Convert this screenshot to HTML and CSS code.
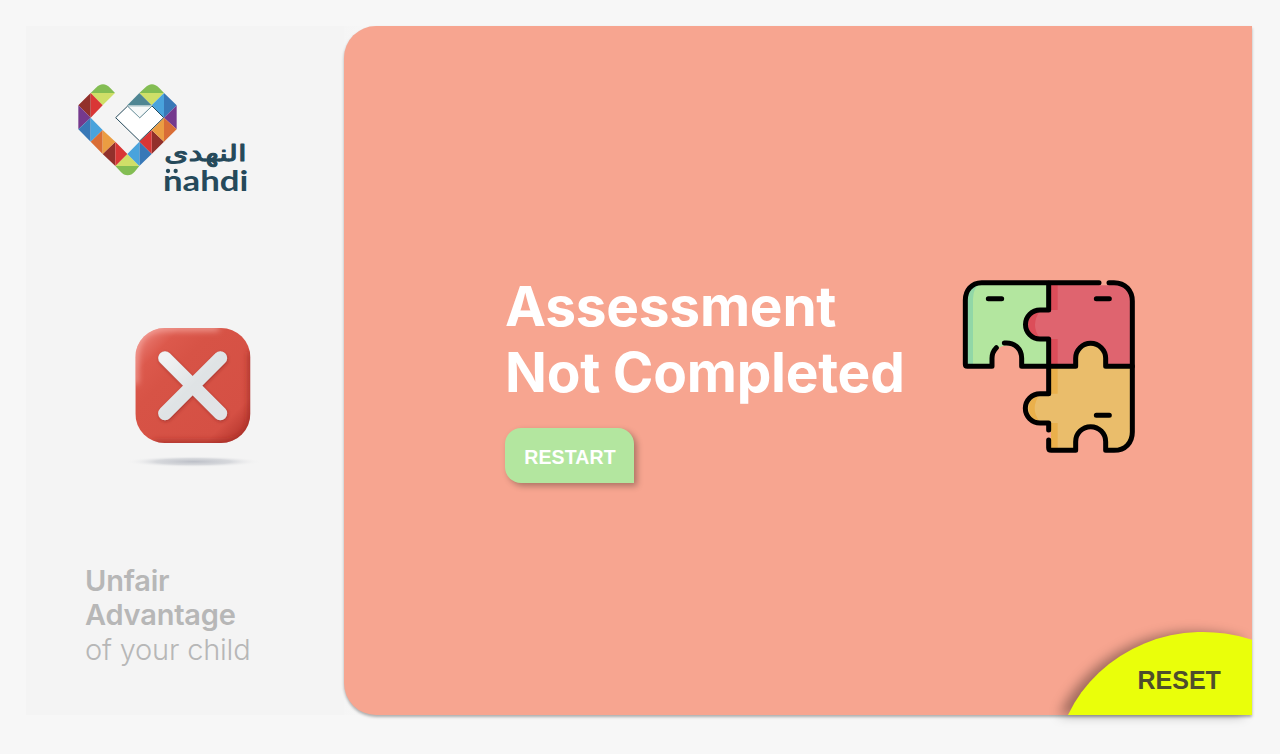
FILE: index.html
```html
<!DOCTYPE html>
<html lang="en">
<head>
<meta charset="utf-8">
<title>Assessment Not Completed</title>
<link rel="stylesheet" href="styles.css">
</head>
<body>
<div class="shell">
  <aside class="side">
    <svg class="logo" viewBox="0 0 570 375" role="img" aria-label="Nahdi">
      <g fill="#83bd53"><path d="M62 54L78 38C90 24 108 24 120 38L135 54ZM208 54L225 38C238 24 254 24 267 38L282 54ZM136 273L152 290C164 304 182 304 194 290L208 273Z"/></g>
      <g fill="#cfdf68"><path d="M62 54H135L98 91ZM208 54H282L245 91ZM172 237L208 273H136Z"/></g>
      <path fill="#92302b" d="M62 54V128L25 91ZM136 200V273L98 237ZM245 165L282 200L245 237Z"/>
      <path fill="#d93635" d="M62 54L98 91L62 128ZM136 200L172 237L136 273ZM245 165V237L208 200Z"/>
      <path fill="#75398d" d="M25 91L62 128L25 163ZM320 91V163L282 128Z"/>
      <path fill="#3878b7" d="M62 128V200L25 163ZM208 200L245 237L208 273ZM282 54L320 91L282 128Z"/>
      <path fill="#49a3dc" d="M62 128L98 165L62 200ZM208 200V273L172 237ZM282 54V128L245 91Z"/>
      <path fill="#d96d36" d="M98 165V237L62 200ZM282 128L320 163L282 200Z"/>
      <path fill="#eb9d42" d="M98 165L136 200L98 237ZM282 128V200L245 165Z"/>
      <path fill="#4f8693" d="M208 54L245 91H172Z"/>
      <path fill="#fff" stroke="#25495a" stroke-width="3" d="M173 93L137 128L209 198L281 128L246 93L209 128Z"/>
      <path fill="#f7f9f9" stroke="#4f8693" stroke-width="1.5" d="M173 93H246L209 128Z"/>
      <text class="logo-ar" x="530" y="259" text-anchor="start" textLength="247" lengthAdjust="spacingAndGlyphs" direction="rtl">النهدى</text>
      <text class="logo-en" x="279" y="347" textLength="256" lengthAdjust="spacingAndGlyphs">nahdi</text>
      <g fill="#25495a"><circle cx="294" cy="288" r="6.5"/><circle cx="317" cy="288" r="6.5"/></g>
    </svg>

    <svg class="cross" viewBox="0 0 450 480" aria-hidden="true">
      <defs>
        <linearGradient id="face" x1="0" y1="0" x2="1" y2="1">
          <stop offset="0" stop-color="#f08c84"/><stop offset=".2" stop-color="#dc594c"/>
          <stop offset=".35" stop-color="#d75346"/><stop offset=".8" stop-color="#d55044"/><stop offset="1" stop-color="#a92b24"/>
        </linearGradient>
        <linearGradient id="bar" x1="0" y1="0" x2="1" y2="1">
          <stop offset="0" stop-color="#f1f2f3"/><stop offset=".5" stop-color="#dfe3e5"/><stop offset="1" stop-color="#e2e3e6"/>
        </linearGradient>
        <radialGradient id="ground"><stop offset="0" stop-color="#bcbfc7"/><stop offset=".55" stop-color="#cfd1d6" stop-opacity=".8"/><stop offset="1" stop-color="#f4f4f4" stop-opacity="0"/></radialGradient>
        <clipPath id="tile"><rect x="46" y="39" width="345" height="345" rx="88"/></clipPath>
        <filter id="soft" filterUnits="userSpaceOnUse" x="-20" y="-20" width="490" height="490"><feGaussianBlur stdDeviation="10"/></filter>
        <filter id="lift" x="-20%" y="-20%" width="140%" height="140%"><feDropShadow dx="2" dy="4" stdDeviation="4" flood-color="#80201a" flood-opacity=".5"/></filter>
      </defs>
      <ellipse cx="220" cy="440" rx="205" ry="17" fill="url(#ground)"/>
      <g clip-path="url(#tile)">
        <rect x="46" y="39" width="345" height="345" fill="url(#face)"/>
        <path d="M395 110V300Q395 388 307 388H100" fill="none" stroke="#98251f" stroke-opacity=".8" stroke-width="18" filter="url(#soft)"/>
        <path d="M46 200V130Q46 39 134 39H290" fill="none" stroke="#f8b4ac" stroke-opacity=".8" stroke-width="16" stroke-linecap="round" filter="url(#soft)"/>
      </g>
      <g filter="url(#lift)"><path d="M135 129L301 295M301 129L135 295" fill="none" stroke="#dfe3e5" stroke-width="41" stroke-linecap="round"/>
      <path d="M135 129L301 295M301 129L135 295" fill="none" stroke="url(#bar)" stroke-width="38" stroke-linecap="round"/></g>
    </svg>

    <p class="tagline"><strong>Unfair<br>Advantage</strong><br>of your child</p>
  </aside>

  <main class="panel">
    <section class="message">
      <h1>Assessment<br>Not Completed</h1>
      <button class="restart">RESTART</button>
    </section>
    <svg class="puzzle" viewBox="0 0 600 585" aria-hidden="true">
      <path fill="#b3e69f" d="M95 38H296V120H270A42 42 0 0 0 270 207H296V289H215V265A45 45 0 0 0 126 265V289H46V87Q46 38 95 38Z"/>
      <path fill="#91d7a7" d="M95 38Q46 38 46 87V289H69V87Q69 50 95 38Z"/>
      <path fill="#df646f" d="M296 38H495Q547 38 547 90V289H467V265A45 45 0 0 0 377 265V289H296V207H270A42 42 0 0 1 270 120H296Z"/>
      <path fill="#dc4d59" d="M296 42H323V120H296ZM296 207H323V289H296ZM270 122A42 42 0 0 0 270 205Q240 165 270 122Z"/>
      <path fill="#eabd6b" d="M296 289H377V265A45 45 0 0 1 467 265V289H547V485Q547 540 495 540H467V515A45 45 0 0 0 377 515V540H296V459H270A44 44 0 0 1 270 371H296Z"/>
      <path fill="#eab04b" d="M296 294H323V371H296ZM296 459H323V536H296ZM270 373A43 43 0 0 0 270 457Q238 415 270 373Z"/>
      <path fill="#f7a590" d="M452 30H472V46H452ZM288 486H303V504H288Z"/>
      <g class="outline">
        <path d="M447 38H95C64 38 46 62 46 90V283Q46 289 52 289H126V265Q126 246 139 233"/>
        <path d="M163 219C195 216 215 238 215 265V289H377V265A45 45 0 0 1 467 265V289H547"/>
        <path d="M477 38H492C526 38 547 62 547 93V486C547 518 526 541 492 541H467V515A45 45 0 0 0 377 515V541H304Q296 541 296 533V510"/>
        <path d="M296 40V120H270A43 43 0 0 0 270 207H296V371H270A44 44 0 0 0 270 459H296V480"/>
        <path d="M115 86H155M439 86H478M439 436H478"/>
      </g>
    </svg>
    <button class="reset">
      <svg class="reset-shape" viewBox="0 0 184 83" aria-hidden="true"><path d="M0 83A148 140 0 0 1 184 7.7V83Z"/></svg>
      <span class="reset-label">RESET</span>
    </button>
  </main>
</div>
</body>
</html>
```
FILE: styles.css
```css
* { box-sizing: border-box; }
body {
  margin: 0;
  height: 754px;
  padding: 25.5px 28px 39px 26px;
  background: #f7f7f7;
  font-family: Inter, "Liberation Sans", sans-serif;
  overflow: hidden;
}
.shell {
  display: flex;
  height: 689.5px;
  background: linear-gradient(90deg, #f4f4f4 300px, #f7f7f7 350px);
}
.side {
  width: 318px;
  padding: 49.5px 0 0 44px;
  display: flex;
  flex-direction: column;
  background: #f4f4f4;
}
.logo { width: 190px; height: 125px; }
.logo text { fill: #25495a; stroke: #25495a; stroke-linejoin: round; }
.logo-ar { font: 400 68px "DejaVu Sans", sans-serif; stroke-width: 3px; }
.logo-en { font: 700 88px Lato, sans-serif; stroke-width: 0; }
.cross { width: 150px; height: 160px; margin: 115px 0 0 50px; }
.tagline {
  margin: 88.5px 0 0 15px;
  color: #b7b7b7;
  font-size: 29px;
  line-height: 34.7px;
  font-weight: 300;
  letter-spacing: -.2px;
}
.tagline strong { font-weight: 600; }
.panel {
  position: relative;
  flex: 1;
  display: flex;
  align-items: flex-start;
  padding: 244.5px 0 0 161px;
  background: #f7a590;
  border-radius: 32px 0 0 32px;
  box-shadow: 0 2px 3px rgba(0, 0, 0, .3);
}
.message { width: 445px; padding-top: 3px; }
h1 {
  margin: 0;
  color: #fff;
  font-size: 55px;
  line-height: 66px;
  font-weight: 700;
  letter-spacing: -.25px;
  white-space: nowrap;
}
button { border: 0; padding: 0; font-family: "Liberation Sans", sans-serif; font-weight: 700; }
.restart {
  display: block;
  width: 129px;
  height: 55px;
  margin-top: 23px;
  padding: 3px 0 0 1px;
  color: #fff;
  background: #b3e69f;
  border-radius: 16px 16px 0 16px;
  box-shadow: 3px 3px 6px rgba(0, 0, 0, .3);
  font-size: 19.5px;
  letter-spacing: .15px;
}
.puzzle { width: 200px; height: 195px; }
.outline { fill: none; stroke: #000; stroke-width: 15; stroke-linecap: round; stroke-linejoin: round; }
.reset {
  position: absolute;
  right: 0;
  bottom: 0;
  width: 184px;
  height: 83px;
  background: none;
}
.reset-shape {
  display: block;
  width: 184px;
  height: 83px;
  overflow: visible;
  fill: #eaff0a;
  filter: drop-shadow(-9px 0 6px rgba(0, 0, 0, .35));
}
.reset-label {
  position: absolute;
  left: 69.5px;
  top: 33px;
  color: #4f4d2c;
  font-size: 25px;
  line-height: 30px;
}
```
